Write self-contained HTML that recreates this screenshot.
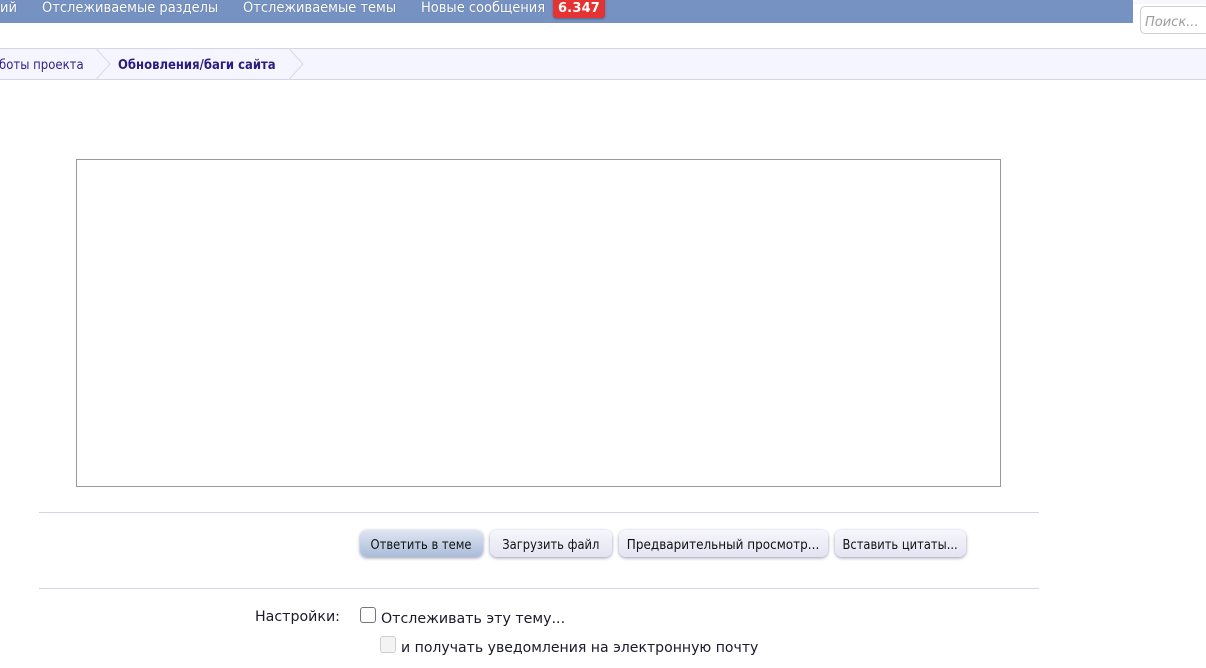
<!DOCTYPE html>
<html lang="ru"><head><meta charset="utf-8"><title>Ответить в теме</title>
<style>
html,body{margin:0;padding:0;background:#fff}
body{width:1206px;height:668px;position:relative;overflow:hidden;font-family:"DejaVu Sans","Liberation Sans",sans-serif}
.a{position:absolute;white-space:nowrap}
.nav{font-size:14px;color:#fff;top:-1px;line-height:18px;text-shadow:0 0 1px rgba(0,0,0,.35);transform-origin:0 50%;transform:scaleX(.93)}
.btn{height:27px;border-radius:7px;background:linear-gradient(#f6f6fc,#e4e3f2);box-shadow:0 1px 3px rgba(70,70,110,.55);font-size:13px;line-height:32px;text-align:center;color:#111;top:530px}
.btn span{display:inline-block;transform:scaleX(.885)}
</style></head><body>
<div class="a" style="left:0;top:0;width:1133px;height:23px;background:#7592c2"></div>
<div class="a nav" style="left:0">ий</div>
<div class="a nav" style="left:42px">Отслеживаемые разделы</div>
<div class="a nav" style="left:243px">Отслеживаемые темы</div>
<div class="a nav" style="left:421px">Новые сообщения</div>
<div class="a" style="left:553px;top:-3px;width:52px;height:21px;background:#e53232;border-radius:0 0 3px 3px;box-shadow:0 1px 2px rgba(0,0,0,.3);color:#fff;font-weight:bold;font-size:13px;line-height:24px;text-align:center;letter-spacing:.2px">6.347</div>
<div class="a" style="left:1133px;top:0;width:73px;height:30px;background:#fff;border-radius:6px 0 0 0"></div>
<div class="a" style="left:1133px;top:0;width:73px;height:4px;background:#f7f8fd;border-radius:6px 0 0 0"></div>
<div class="a" style="left:1140px;top:6px;width:70px;height:28px;box-sizing:border-box;border:1px solid #cfcfcf;border-radius:5px;background:#fff;font-style:italic;font-size:13px;line-height:32px;padding-left:4px;color:#9c9c9c">Поиск...</div>

<div class="a" style="left:0;top:48px;width:1206px;height:32px;box-sizing:border-box;background:#f5f5ff;border-top:1px solid #d5d5e6;border-bottom:1px solid #d5d5e6"></div>
<svg class="a" style="left:0;top:48px" width="320" height="32"><path d="M96 .5L110 16L96 31.5" fill="none" stroke="#d9d9e8"/><path d="M289 .5L303 16L289 31.5" fill="none" stroke="#d9d9e8"/></svg>
<div class="a" style="left:-1px;top:58px;font-size:13px;line-height:16px;color:#2e1f8c;transform:scaleX(.9);transform-origin:0 50%">боты проекта</div>
<div class="a" style="left:118px;top:58px;font-size:13px;font-weight:bold;line-height:16px;color:#2a1c80;transform:scaleX(.896);transform-origin:0 50%">Обновления/баги сайта</div>

<div class="a" style="left:76px;top:159px;width:925px;height:328px;box-sizing:border-box;border:1px solid #999;background:#fff"></div>
<div class="a" style="left:39px;top:512px;width:1000px;height:1px;background:#d8d3e2"></div>

<div class="a btn" style="left:360px;width:123px;background:linear-gradient(#dfe6f2,#a9bcd9)"><span>Ответить в теме</span></div>
<div class="a btn" style="left:490px;width:122px"><span>Загрузить файл</span></div>
<div class="a btn" style="left:619px;width:209px"><span style="transform:scaleX(.925)">Предварительный просмотр...</span></div>
<div class="a btn" style="left:835px;width:131px"><span>Вставить цитаты...</span></div>

<div class="a" style="left:39px;top:588px;width:1000px;height:1px;background:#d8d3e2"></div>

<div class="a" style="left:255px;top:608px;font-size:14px;line-height:18px;color:#1a1a2a;transform:scaleX(1.014);transform-origin:0 50%">Настройки:</div>
<div class="a" style="left:360px;top:607px;width:16px;height:16px;box-sizing:border-box;border:1px solid #767676;border-radius:3px;background:#fff"></div>
<div class="a" style="left:381px;top:610px;font-size:14px;line-height:19px;color:#1a1a2a;transform:scaleX(1.015);transform-origin:0 50%">Отслеживать эту тему...</div>
<div class="a" style="left:380px;top:636px;width:16px;height:17px;box-sizing:border-box;border:1px solid #cfcfcf;border-radius:3px;background:#f3f3f3"></div>
<div class="a" style="left:401px;top:639px;font-size:14px;line-height:19px;color:#1a1a2a;transform:scaleX(1.005);transform-origin:0 50%">и получать уведомления на электронную почту</div>
</body></html>
